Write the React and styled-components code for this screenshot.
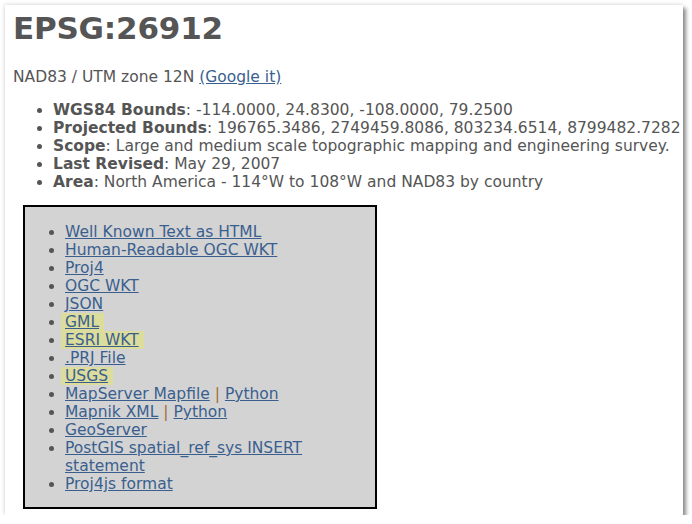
import React from "react"
import styled, { createGlobalStyle } from "styled-components"

const GlobalStyle = createGlobalStyle`
  html, body {
    margin: 0;
    padding: 0;
    background: #fff;
  }
  body {
    font-family: "DejaVu Sans", Verdana, sans-serif;
    font-size: 15.5px;
    color: #555;
  }
`

const info = [
  { label: "WGS84 Bounds", value: "-114.0000, 24.8300, -108.0000, 79.2500" },
  {
    label: "Projected Bounds",
    value: "196765.3486, 2749459.8086, 803234.6514, 8799482.7282",
  },
  {
    label: "Scope",
    value: "Large and medium scale topographic mapping and engineering survey.",
  },
  { label: "Last Revised", value: "May 29, 2007" },
  { label: "Area", value: "North America - 114°W to 108°W and NAD83 by country" },
]

const formats = [
  { links: ["Well Known Text as HTML"] },
  { links: ["Human-Readable OGC WKT"] },
  { links: ["Proj4"] },
  { links: ["OGC WKT"] },
  { links: ["JSON"] },
  { links: ["GML"], marked: true },
  { links: ["ESRI WKT"], marked: true },
  { links: [".PRJ File"] },
  { links: ["USGS"], marked: true },
  { links: ["MapServer Mapfile", "Python"] },
  { links: ["Mapnik XML", "Python"] },
  { links: ["GeoServer"] },
  { links: ["PostGIS spatial_ref_sys INSERT statement"] },
  { links: ["Proj4js format"] },
]

const App = () => {
  return (
    <React.Fragment>
      <GlobalStyle />
      <StyledFrame>
        <StyledTitle>EPSG:26912</StyledTitle>
        <StyledIntro>
          NAD83 / UTM zone 12N <StyledLink href="#">(Google it)</StyledLink>
        </StyledIntro>
        <StyledInfoUL>
          {info.map(item => (
            <li key={item.label}>
              <b>{item.label}</b>: {item.value}
            </li>
          ))}
        </StyledInfoUL>
        <StyledBox>
          <StyledFormatUL>
            {formats.map((item, index) => (
              <li key={index}>
                {item.links.map((text, i) => (
                  <React.Fragment key={text}>
                    {i > 0 && <StyledPipe> | </StyledPipe>}
                    <StyledLink href="#" $marked={item.marked}>
                      {text}
                    </StyledLink>
                  </React.Fragment>
                ))}
              </li>
            ))}
          </StyledFormatUL>
        </StyledBox>
      </StyledFrame>
    </React.Fragment>
  )
}

const StyledFrame = styled.div`
  margin: 5px 0 0 5px;
  width: 678px;
  height: 510px;
  box-sizing: border-box;
  padding: 5px 0 0 8px;
  background: #fff;
  box-shadow: 3px 3px 4px rgba(0, 0, 0, 0.45), -1px -1px 4px rgba(0, 0, 0, 0.12);
  overflow: hidden;
`

const StyledTitle = styled.h1`
  margin: 0;
  font-size: 31px;
  letter-spacing: -0.2px;
  font-weight: bold;
  color: #555;
`

const StyledIntro = styled.p`
  margin: 22px 0 15px;
  line-height: 18px;
`

const StyledLink = styled.a`
  color: #3a5f8f;
  text-decoration: underline;
  padding: ${props => (props.$marked ? "0 5px 0 4px" : "0")};
  margin-left: ${props => (props.$marked ? "-4px" : "0")};
  background: ${props => (props.$marked ? "#dcdc9c" : "transparent")};
`

const StyledInfoUL = styled.ul`
  margin: 0 0 14px;
  padding-left: 40px;
  line-height: 18px;
  li {
    white-space: nowrap;
  }
  b {
    color: #555;
  }
`

const StyledBox = styled.div`
  margin-left: 10px;
  width: 354px;
  box-sizing: border-box;
  border: 2px solid #000;
  background: #d3d3d3;
`

const StyledFormatUL = styled.ul`
  margin: 16px 0 14px;
  padding: 0 20px 0 40px;
  line-height: 18px;
`

const StyledPipe = styled.span`
  color: #a0703a;
`

export default App
